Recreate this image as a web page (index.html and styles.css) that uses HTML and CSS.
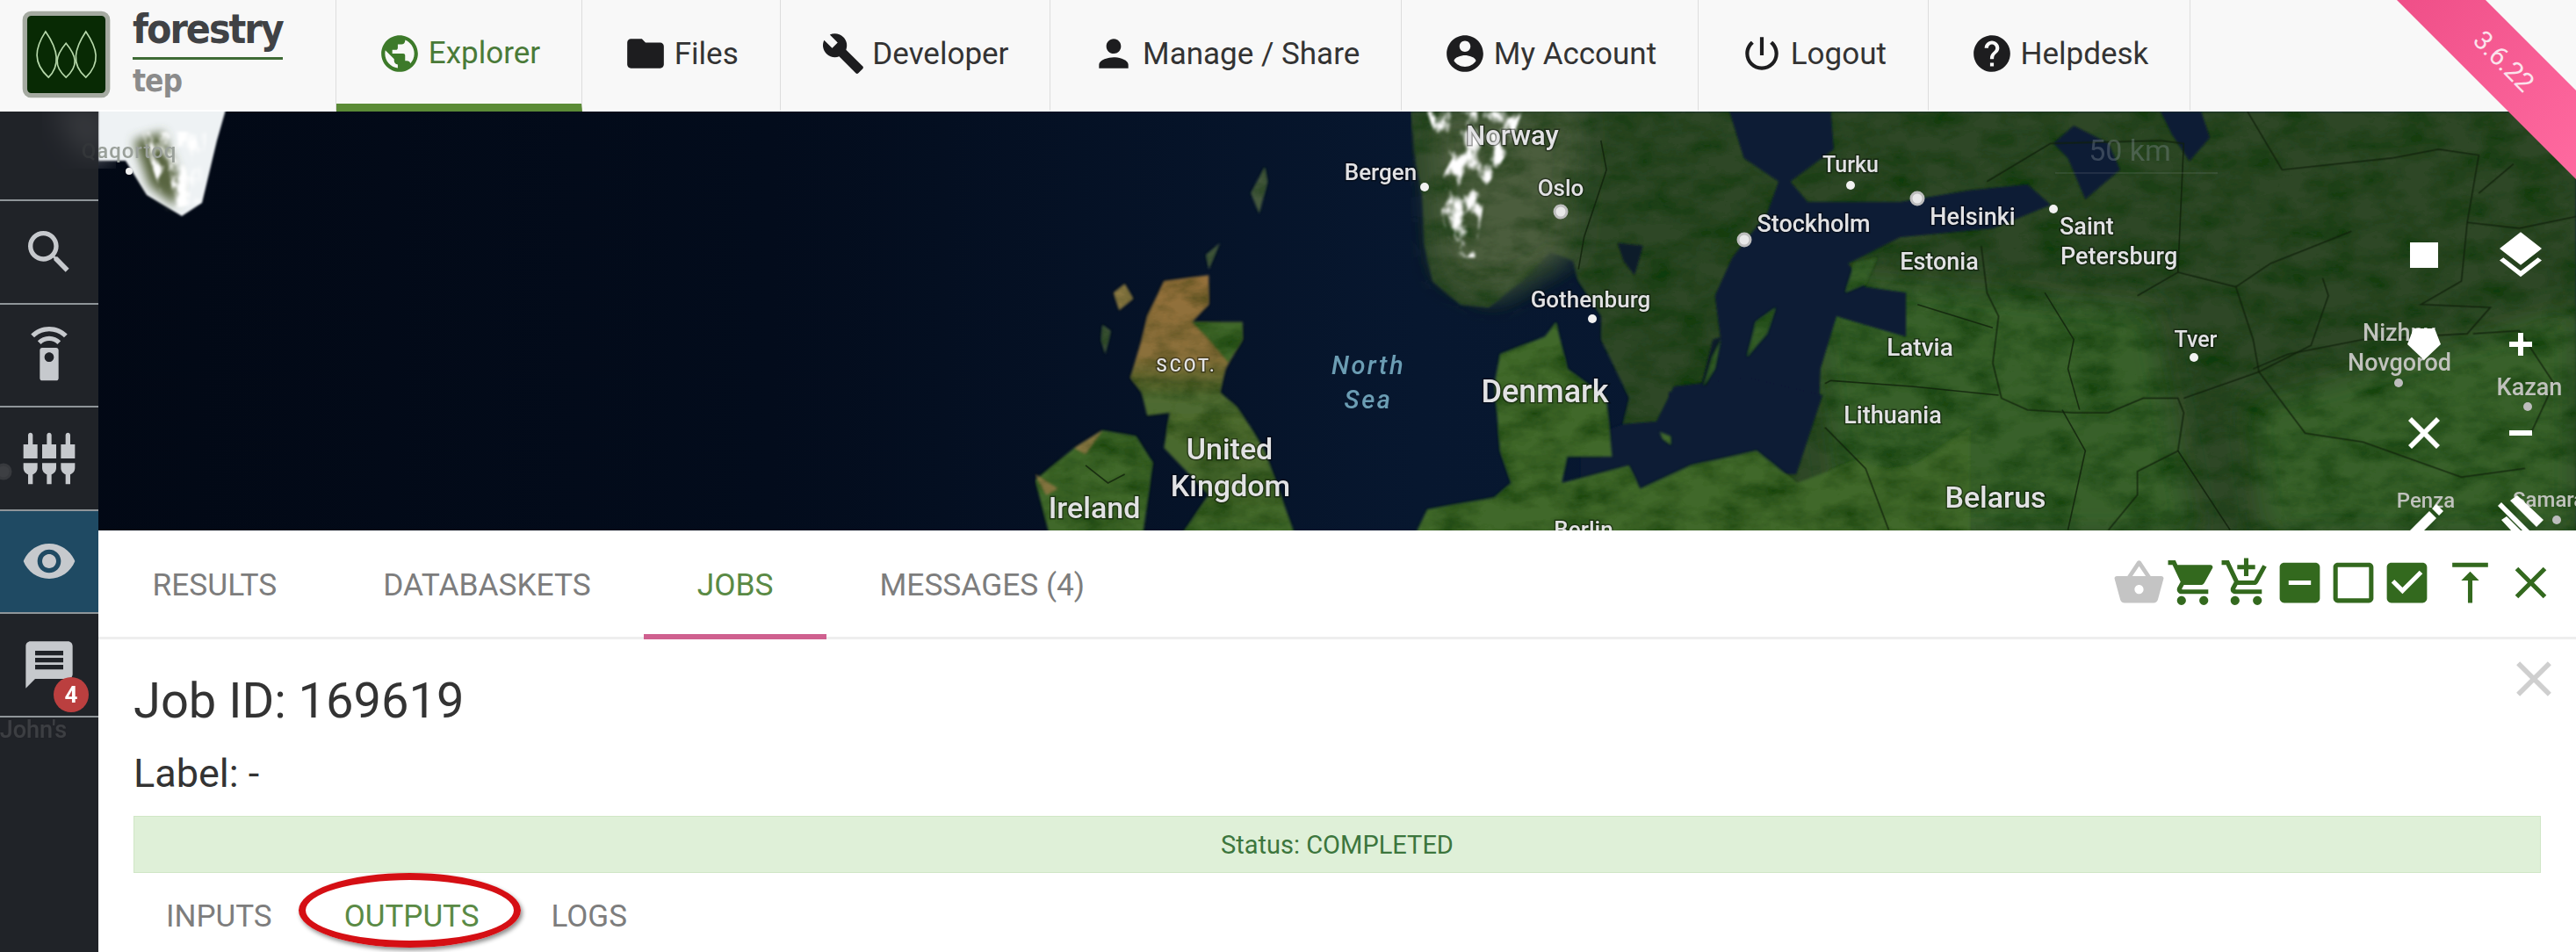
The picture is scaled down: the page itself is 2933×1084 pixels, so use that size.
FILE: index.html
```html
<!DOCTYPE html>
<html lang="en">
<head>
<meta charset="utf-8">
<title>Forestry TEP</title>
<link rel="stylesheet" href="styles.css">
</head>
<body>
<div class="app">
  <header class="topbar">
    <div class="brand">
      <svg class="logo" viewBox="72 30 308 313">
        <rect x="84" y="46" width="284" height="281" rx="22" class="logo-box"/>
        <path class="leaf" d="M155 108C118 165 110 215 165 265C210 220 195 165 155 108Z"/>
        <path class="leaf" d="M293 108C255 165 240 220 293 265C345 215 332 165 293 108Z"/>
        <path class="leaf" d="M225 148C190 190 180 225 225 265C270 225 260 190 225 148Z"/>
      </svg>
      <div class="wordmark">
        <span class="word-main">forestry</span>
        <span class="word-sub">tep</span>
      </div>
    </div>
    <nav class="nav">
      <a class="nav-item active"><svg class="nav-icon" viewBox="0 0 24 24"><path d="M12 2C6.48 2 2 6.48 2 12s4.48 10 10 10 10-4.48 10-10S17.52 2 12 2zm-1 17.93c-3.95-.49-7-3.85-7-7.93 0-.62.08-1.21.21-1.79L9 15v1c0 1.1.9 2 2 2v1.93zm6.9-2.54c-.26-.81-1-1.39-1.9-1.39h-1v-3c0-.55-.45-1-1-1H8v-2h2c.55 0 1-.45 1-1V7h2c1.1 0 2-.9 2-2v-.41c2.93 1.19 5 4.06 5 7.41 0 2.08-.8 3.97-2.1 5.39z"/></svg>Explorer</a>
      <a class="nav-item"><svg class="nav-icon" viewBox="0 0 24 24"><path d="M10 4H4c-1.1 0-1.99.9-1.99 2L2 18c0 1.1.9 2 2 2h16c1.1 0 2-.9 2-2V8c0-1.1-.9-2-2-2h-8l-2-2z"/></svg>Files</a>
      <a class="nav-item"><svg class="nav-icon" viewBox="0 0 24 24"><path d="M22.7 19l-9.1-9.1c.9-2.3.4-5-1.5-6.9-2-2-5-2.4-7.4-1.3L9 6 6 9 1.6 4.7C.4 7.1.9 10.1 2.9 12.1c1.9 1.9 4.6 2.4 6.9 1.5l9.1 9.1c.4.4 1 .4 1.4 0l2.3-2.3c.5-.4.5-1.1.1-1.4z"/></svg>Developer</a>
      <a class="nav-item"><svg class="nav-icon" viewBox="0 0 24 24"><path d="M12 12c2.21 0 4-1.79 4-4s-1.79-4-4-4-4 1.79-4 4 1.79 4 4 4zm0 2c-2.67 0-8 1.34-8 4v2h16v-2c0-2.66-5.33-4-8-4z"/></svg>Manage / Share</a>
      <a class="nav-item"><svg class="nav-icon" viewBox="0 0 24 24"><path d="M12 2C6.48 2 2 6.48 2 12s4.48 10 10 10 10-4.48 10-10S17.52 2 12 2zm0 3c1.66 0 3 1.34 3 3s-1.34 3-3 3-3-1.34-3-3 1.34-3 3-3zm0 14.2c-2.5 0-4.71-1.28-6-3.22.03-1.99 4-3.08 6-3.08 1.99 0 5.97 1.09 6 3.08-1.29 1.94-3.5 3.22-6 3.22z"/></svg>My Account</a>
      <a class="nav-item"><svg class="nav-icon" viewBox="0 0 24 24"><path d="M13 3h-2v10h2V3zm4.83 2.17l-1.42 1.42C17.99 7.86 19 9.81 19 12c0 3.87-3.13 7-7 7s-7-3.13-7-7c0-2.19 1.01-4.14 2.58-5.42L6.17 5.17C4.23 6.82 3 9.26 3 12c0 4.97 4.03 9 9 9s9-4.03 9-9c0-2.74-1.23-5.18-3.17-6.83z"/></svg>Logout</a>
      <a class="nav-item"><svg class="nav-icon" viewBox="0 0 24 24"><path d="M12 2C6.48 2 2 6.48 2 12s4.48 10 10 10 10-4.48 10-10S17.52 2 12 2zm1 17h-2v-2h2v2zm2.07-7.75l-.9.92C13.45 12.9 13 13.5 13 15h-2v-.5c0-1.1.45-2.1 1.17-2.83l1.24-1.26c.37-.36.59-.86.59-1.41 0-1.1-.9-2-2-2s-2 .9-2 2H8c0-2.21 1.79-4 4-4s4 1.79 4 4c0 .88-.36 1.68-.93 2.25z"/></svg>Helpdesk</a>
    </nav>
  </header>

  <div class="stage">
    <svg class="map" viewBox="0 127 2933 957" preserveAspectRatio="none">
      <defs>
        <linearGradient id="sea" x1="0" x2="1" y1="0" y2="0">
          <stop offset="0" stop-color="#020814"/>
          <stop offset=".3" stop-color="#030c1c"/>
          <stop offset=".55" stop-color="#07172f"/>
          <stop offset="1" stop-color="#0a1a36"/>
        </linearGradient>
        <linearGradient id="uk" x1="0" x2="0" y1="0" y2="1">
          <stop offset="0" stop-color="#94703a"/>
          <stop offset=".3" stop-color="#8a6f3a"/>
          <stop offset=".45" stop-color="#4f6a30"/>
          <stop offset="1" stop-color="#3f662a"/>
        </linearGradient>
        <filter id="land" x="0" y="0" width="100%" height="100%">
          <feGaussianBlur in="SourceGraphic" stdDeviation="1.5" result="b"/>
          <feTurbulence type="fractalNoise" baseFrequency=".022 .04" numOctaves="5" seed="7" result="n"/>
          <feColorMatrix in="n" type="matrix" values="0 0 0 0 0 0 0 0 0 .04 0 0 0 0 0 0 0 0 1.5 -.55" result="d"/>
          <feComposite in="d" in2="b" operator="in" result="m"/>
          <feMerge><feMergeNode in="b"/><feMergeNode in="m"/></feMerge>
        </filter>
        <filter id="soft" x="-20%" y="-20%" width="140%" height="140%"><feGaussianBlur stdDeviation="16"/></filter>
        <filter id="edge" x="-5%" y="-5%" width="110%" height="110%"><feGaussianBlur stdDeviation="1.2"/></filter>
        <filter id="haze" x="-30%" y="-30%" width="160%" height="160%"><feGaussianBlur stdDeviation="6"/></filter>
        <filter id="snow" x="-20%" y="-20%" width="140%" height="140%">
          <feTurbulence type="fractalNoise" baseFrequency=".06 .04" numOctaves="4" seed="4" result="n"/>
          <feColorMatrix in="n" type="matrix" values="0 0 0 0 1 0 0 0 0 1 0 0 0 0 1 0 0 0 5 -2.3" result="w"/>
          <feComposite in="w" in2="SourceAlpha" operator="in"/>
          <feGaussianBlur stdDeviation="1.6"/>
        </filter>
      </defs>

      <rect x="0" y="127" width="2933" height="957" fill="url(#sea)"/>

      <polygon class="ghost" filter="url(#soft)" points="60,120 120,120 120,180 90,175"/>
      <g filter="url(#edge)">
        <polygon class="ice" points="112,125 257,125 247,160 230,231 207,246 167,222 143,183 112,183"/>
      </g>
      <polygon class="ice-green" filter="url(#haze)" points="152,160 185,150 205,205 200,235 170,212"/>
      <g filter="url(#snow)">
        <polygon class="snow" points="160,150 235,150 228,230 190,240"/>
      </g>

      <g filter="url(#land)">
        <polygon class="land-north" points="1606,127 1612,187 1619,220 1622,280 1631,320 1663,347 1695,350 1733,320 1765,287 1791,297 1797,320 1823,360 1823,387 1855,453 1848,483 1880,610 2933,610 2933,127"/>
        <polygon class="land-mid" filter="url(#soft)" points="2060,310 2450,350 2500,610 2100,610"/>
        <polygon class="land-mid" filter="url(#soft)" points="2560,460 2933,350 2933,610 2580,610"/>
        <polygon class="land-nor" filter="url(#soft)" points="1625,127 1800,127 1790,290 1700,340 1640,310"/>
      </g>

      <g filter="url(#edge)">
        <g transform="translate(1900 120) scale(.6588 .3333)">
          <path class="water" d="M105 20L280 20L285 150L210 260L240 330L400 330L520 290L620 270L660 340L560 420L400 450L350 500L310 540L340 620L410 640L410 790L340 750L290 720L262 900L260 1010L215 1230L170 1245L100 1200L0 1280L0 980L55 960L90 800L80 650L110 520L170 370L190 260L130 180Z"/>
          <path class="water" d="M665 130L700 70L760 130L780 220L720 320L690 180Z"/>
          <path class="water" d="M850 20L920 20L935 110L900 190L870 100Z"/>
        </g>
        <polygon class="water" points="1848,483 1886,480 1906,440 1990,430 2075,450 2045,540 2000,540 1900,560 1860,610 1800,610 1800,500"/>
        <g transform="translate(1000 120) scale(.6378 .3333)">
          <path class="lake" d="M1320 470L1365 480L1350 580L1330 530Z"/>
          <path class="lake" d="M1490 800L1505 790L1480 960L1470 950Z"/>
        </g>
      </g>

      <g filter="url(#land)">
        <g transform="translate(1900 120) scale(.6588 .3333)">
          <path class="land-mid" d="M135 860L150 740L185 690L170 780Z"/>
          <path class="land-mid" d="M305 640L320 540L360 520L340 610Z"/>
          <path class="land-mid" d="M60 960L75 860L90 800L80 900Z"/>
        </g>
        <g transform="translate(1000 120) scale(.6378 .3333)">
          <path class="land-south" d="M950 1500L980 1380L1100 1340L1130 1290L1110 1180L1100 950L1110 850L1190 790L1210 740L1230 900L1300 1000L1310 1200L1230 1200L1220 1290L1340 1230L1360 1310L1450 1230L1568 1180L1640 1290L1750 1210L1800 1245L1850 1230L1950 1100L1950 1500Z"/>
          <path class="land-south" d="M1395 1115L1415 1130L1415 1160L1400 1140Z"/>
          <path class="land-uk" d="M510 600L590 580L590 680L560 740L650 740L650 800L620 900L610 980L640 1030L665 1100L690 1180L750 1500L530 1500L590 1330L510 1170L520 1050L480 1060L470 980L450 930L470 800L480 720Z"/>
          <path class="land-south" d="M560 740L650 740L650 800L625 880L590 800Z"/>
          <path class="land-south" d="M400 1110L460 1130L490 1220L470 1500L310 1500L280 1280L350 1170Z"/>
          <path class="land-tan" d="M400 1110L350 1170L370 1190Z"/>
          <path class="land-tan" d="M280 1260L320 1310L300 1330Z"/>
          <path class="land-tan" d="M440 610L455 660L430 700L420 640Z"/>
          <path class="land-isle" d="M400 750L415 770L405 850L398 800Z"/>
          <path class="land-isle" d="M690 210L695 260L680 370L665 300Z"/>
          <path class="land-isle" d="M610 470L590 560L585 510Z"/>
        </g>
      </g>

      <g filter="url(#snow)">
        <g transform="translate(1000 120) scale(.6378 .3333)">
          <path class="snow" d="M980 20L1150 20L1120 170L1085 280L1065 520L1030 520L1005 380L1005 250L1025 180L990 80Z"/>
        </g>
      </g>

      <g transform="translate(1900 120) scale(.6588 .3333)" class="borders">
        <path d="M540 480L550 640L570 720L560 880L575 1000L620 1040L700 1050L760 1050L820 1000L880 1000L890 1050L880 1180L810 1250L810 1330L760 1450"/>
        <path d="M270 950L280 940L420 960L570 990M270 1100L340 1240L380 1450"/>
        <path d="M430 680L560 760M650 640L700 800L690 900L710 1040"/>
        <path d="M810 650L880 570L890 130L850 120L660 130L550 260"/>
        <path d="M880 570L980 620L1010 800L1020 910L890 1000"/>
        <path d="M1130 590L1140 650L1110 820L1020 910L1100 1120L1200 1150L1370 1270L1480 1240"/>
        <path d="M1000 20L1060 220L1250 180L1330 150L1400 170L1380 400L1370 600L1300 680L1420 690L1380 780L1200 800L1070 850L1010 900"/>
        <path d="M1490 1120L1530 950L1470 770L1390 780M1460 200L1400 300M1180 430L1040 540L980 620M1568 380L1470 420L1380 400"/>
        <path d="M690 1450L720 1180L680 1040M970 1450L880 1180"/>
      </g>
      <g transform="translate(1000 120) scale(.6378 .3333)" class="borders">
        <path d="M1290 120L1300 220L1260 450L1250 560M370 1230L410 1290L440 1260"/>
      </g>

      <circle class="dot" cx="147" cy="195" r="4"/>
      <circle class="dot" cx="1622" cy="213" r="5"/>
      <circle class="ring" cx="1777" cy="241" r="7"/>
      <circle class="dot" cx="1813" cy="363" r="5"/>
      <circle class="ring" cx="1986" cy="273" r="7"/>
      <circle class="dot" cx="2107" cy="211" r="5"/>
      <circle class="ring" cx="2183" cy="226" r="7"/>
      <circle class="dot" cx="2338" cy="238" r="5"/>
      <circle class="dot" cx="2498" cy="407" r="5"/>
      <circle class="dot dim" cx="2731" cy="436" r="5"/>
      <circle class="dot dim" cx="2878" cy="463" r="5"/>
      <circle class="dot dim" cx="2911" cy="592" r="5"/>
      <circle class="ring" cx="4" cy="537" r="8"/>

      <text class="lbl s24 qq" x="147" y="180">Qaqortoq</text>
      <text class="lbl s27" x="38" y="840">John's</text>
      <text class="lbl s30" x="1722" y="165">Norway</text>
      <text class="lbl s26" x="1572" y="205">Bergen</text>
      <text class="lbl s26" x="1777" y="223">Oslo</text>
      <text class="lbl s26" x="1811" y="350">Gothenburg</text>
      <text class="lbl s27" x="2065" y="264">Stockholm</text>
      <text class="lbl s25" x="2107" y="196">Turku</text>
      <text class="lbl s27" x="2246" y="256">Helsinki</text>
      <text class="lbl s27 start" x="2345" y="267">Saint</text>
      <text class="lbl s27 start" x="2346" y="301">Petersburg</text>
      <text class="lbl s27" x="2208" y="307">Estonia</text>
      <text class="lbl s28" x="2186" y="405">Latvia</text>
      <text class="lbl s27" x="2155" y="482">Lithuania</text>
      <text class="lbl s34" x="2272" y="578">Belarus</text>
      <text class="lbl s25" x="2500" y="395">Tver</text>
      <text class="lbl s27 dim start" x="2690" y="388">Nizhny</text>
      <text class="lbl s27 dim" x="2732" y="422">Novgorod</text>
      <text class="lbl s27 dim" x="2880" y="450">Kazan</text>
      <text class="lbl s24 dim" x="2762" y="578">Penza</text>
      <text class="lbl s24 dim start" x="2861" y="577">Samara</text>
      <text class="lbl s37" x="1759" y="458">Denmark</text>
      <text class="lbl s34" x="1400" y="523">United</text>
      <text class="lbl s34" x="1401" y="565">Kingdom</text>
      <text class="lbl s34" x="1246" y="590">Ireland</text>
      <text class="lbl scot" x="1351" y="423">SCOT.</text>
      <text class="sea-lbl" x="1558" y="426">North</text>
      <text class="sea-lbl" x="1558" y="465">Sea</text>
      <text class="lbl s26" x="1803" y="612">Berlin</text>
      <text class="scale-text" x="2425" y="183">50 km</text>
      <line class="scale-line" x1="2340" x2="2525" y1="197" y2="197"/>
    </svg>

    <div class="overlay">
      <aside class="sidebar">
        <div class="side-item side-top"></div>
        <div class="side-item"><svg class="side-icon" viewBox="0 0 24 24"><path d="M15.5 14h-.79l-.28-.27C15.41 12.59 16 11.11 16 9.5 16 5.91 13.09 3 9.5 3S3 5.91 3 9.5 5.91 16 9.5 16c1.61 0 3.09-.59 4.23-1.57l.27.28v.79l5 4.99L20.49 19l-4.99-5zm-6 0C7.01 14 5 11.99 5 9.5S7.01 5 9.5 5 14 7.01 14 9.5 11.99 14 9.5 14z"/></svg></div>
        <div class="side-item"><svg class="side-icon" viewBox="0 0 24 24"><path d="M15 9H9c-.55 0-1 .45-1 1v12c0 .55.45 1 1 1h6c.55 0 1-.45 1-1V10c0-.55-.45-1-1-1zm-3 6c-1.1 0-2-.9-2-2s.9-2 2-2 2 .9 2 2-.9 2-2 2zM7.05 6.05l1.41 1.41C9.37 6.56 10.62 6 12 6s2.63.56 3.54 1.46l1.41-1.41C15.68 4.78 13.93 4 12 4s-3.68.78-4.95 2.05zM12 0C8.96 0 6.21 1.23 4.22 3.22l1.41 1.41C7.26 3.01 9.51 2 12 2s4.74 1.01 6.36 2.64l1.41-1.41C17.79 1.23 15.04 0 12 0z"/></svg></div>
        <div class="side-item"><svg class="side-icon" viewBox="0 0 24 24"><path d="M5 2c0-.55-.45-1-1-1s-1 .45-1 1v4H1v6h6V6H5V2zm4 14c0 1.3.84 2.4 2 2.82V23h2v-4.18c1.16-.41 2-1.51 2-2.82v-2H9v2zm-8 0c0 1.3.84 2.4 2 2.82V23h2v-4.18C6.16 18.4 7 17.3 7 16v-2H1v2zM21 6V2c0-.55-.45-1-1-1s-1 .45-1 1v4h-2v6h6V6h-2zm-8-4c0-.55-.45-1-1-1s-1 .45-1 1v4H9v6h6V6h-2V2zm4 14c0 1.3.84 2.4 2 2.82V23h2v-4.18c1.16-.41 2-1.51 2-2.82v-2h-6v2z"/></svg></div>
        <div class="side-item side-active"><svg class="side-icon" viewBox="0 0 24 24"><path d="M12 4.5C7 4.5 2.73 7.61 1 12c1.73 4.39 6 7.5 11 7.5s9.27-3.11 11-7.5c-1.73-4.39-6-7.5-11-7.5zM12 17c-2.76 0-5-2.24-5-5s2.24-5 5-5 5 2.24 5 5-2.24 5-5 5zm0-8c-1.66 0-3 1.34-3 3s1.34 3 3 3 3-1.34 3-3-1.34-3-3-3z"/></svg></div>
        <div class="side-item"><svg class="side-icon" viewBox="0 0 24 24"><path d="M20 2H4c-1.1 0-1.99.9-1.99 2L2 22l4-4h14c1.1 0 2-.9 2-2V4c0-1.1-.9-2-2-2zm-2 12H6v-2h12v2zm0-3H6V9h12v2zm0-3H6V6h12v2z"/></svg><span class="badge">4</span></div>
      </aside>

      <main class="work">
        <div class="map-window">
          <div class="map-tools">
            <svg class="tool" viewBox="0 0 64 64"><rect x="16" y="17" width="32" height="29"/></svg>
            <svg class="tool" viewBox="0 0 24 24"><path d="M11.99 18.54l-7.37-5.73L3 14.07l9 7 9-7-1.63-1.27-7.38 5.74zM12 16l7.36-5.73L21 9l-9-7-9 7 1.63 1.27L12 16z"/></svg>
            <svg class="tool" viewBox="0 0 64 64"><polygon points="20,14 44,14 51,32 32,50 13,32"/></svg>
            <svg class="tool" viewBox="0 0 64 64"><path d="M29 19h6v10h10v6H35v10h-6V35H19v-6h10z"/></svg>
            <svg class="tool" viewBox="0 0 64 64"><path d="M18 14l14 14 14-14 4 4-14 14 14 14-4 4-14-14-14 14-4-4 14-14-14-14z"/></svg>
            <svg class="tool" viewBox="0 0 64 64"><rect x="19" y="29" width="26" height="6"/></svg>
            <svg class="tool" viewBox="0 0 64 64"><path d="M10 48L38 20l8 8-28 28-8 0zM41 17l5-5 8 8-5 5z"/></svg>
            <svg class="tool" viewBox="0 0 64 64"><path d="M6 14l4-4 44 44-4 4zM20 8l8-6 30 28-8 8zM10 30l6-4 24 24-6 6z"/></svg>
          </div>
        </div>

        <section class="panel">
          <div class="panel-head">
            <div class="panel-tabs">
              <a class="ptab">RESULTS</a>
              <a class="ptab">DATABASKETS</a>
              <a class="ptab ptab-active">JOBS</a>
              <a class="ptab">MESSAGES (4)</a>
            </div>
            <div class="actions">
              <svg class="act act-off" viewBox="0 0 24 24"><path d="M17.21 9l-4.38-6.56c-.19-.28-.51-.42-.83-.42-.32 0-.64.14-.83.43L6.79 9H2c-.55 0-1 .45-1 1 0 .09.01.18.04.27l2.54 9.27c.23.84 1 1.46 1.92 1.46h13c.92 0 1.69-.62 1.93-1.46l2.54-9.27L23 10c0-.55-.45-1-1-1h-4.79zM9 9l3-4.4L15 9H9zm3 8c-1.1 0-2-.9-2-2s.9-2 2-2 2 .9 2 2-.9 2-2 2z"/></svg>
              <svg class="act" viewBox="0 0 24 24"><path d="M7 18c-1.1 0-1.99.9-1.99 2S5.9 22 7 22s2-.9 2-2-.9-2-2-2zM1 2v2h2l3.6 7.59-1.35 2.45c-.16.28-.25.61-.25.96 0 1.1.9 2 2 2h12v-2H7.42c-.14 0-.25-.11-.25-.25l.03-.12.9-1.63h7.45c.75 0 1.41-.41 1.75-1.03l3.58-6.49c.08-.14.12-.31.12-.48 0-.55-.45-1-1-1H5.21l-.94-2H1zm16 16c-1.1 0-1.99.9-1.99 2s.89 2 1.99 2 2-.9 2-2-.9-2-2-2z"/></svg>
              <svg class="act" viewBox="0 0 24 24"><path d="M11 9h2V6h3V4h-3V1h-2v3H8v2h3v3zm-4 9c-1.1 0-1.99.9-1.99 2S5.9 22 7 22s2-.9 2-2-.9-2-2-2zm10 0c-1.1 0-1.99.9-1.99 2s.89 2 1.99 2 2-.9 2-2-.9-2-2-2zm-9.83-3.25l.03-.12.9-1.63h7.45c.75 0 1.41-.41 1.75-1.03l3.86-7.01L19.42 4h-.01l-1.1 2-2.76 5H8.53l-.13-.27L6.16 6l-.95-2-.94-2H1v2h2l3.6 7.59-1.35 2.45c-.16.28-.25.61-.25.96 0 1.1.9 2 2 2h12v-2H7.42c-.13 0-.25-.11-.25-.25z"/></svg>
              <svg class="act" viewBox="0 0 24 24"><path d="M19 3H5c-1.1 0-2 .9-2 2v14c0 1.1.9 2 2 2h14c1.1 0 2-.9 2-2V5c0-1.1-.9-2-2-2zm-2 10H7v-2h10v2z"/></svg>
              <svg class="act" viewBox="0 0 24 24"><path d="M19 5v14H5V5h14m0-2H5c-1.1 0-2 .9-2 2v14c0 1.1.9 2 2 2h14c1.1 0 2-.9 2-2V5c0-1.1-.9-2-2-2z"/></svg>
              <svg class="act" viewBox="0 0 24 24"><path d="M19 3H5c-1.11 0-2 .9-2 2v14c0 1.1.89 2 2 2h14c1.11 0 2-.9 2-2V5c0-1.1-.89-2-2-2zm-9 14l-5-5 1.41-1.41L10 14.17l7.59-7.59L19 8l-9 9z"/></svg>
              <svg class="act act-top" viewBox="0 0 24 24"><path d="M8 11h3v10h2V11h3l-4-4-4 4zM4 3v2h16V3H4z"/></svg>
              <svg class="act act-close" viewBox="0 0 24 24"><path d="M19 6.41L17.59 5 12 10.59 6.41 5 5 6.41 10.59 12 5 17.59 6.41 19 12 13.41 17.59 19 19 17.59 13.41 12z"/></svg>
            </div>
          </div>

          <div class="job">
            <div class="job-head">
              <h1 class="job-id">Job ID: 169619</h1>
              <svg class="job-close" viewBox="0 0 24 24"><path d="M19 6.41L17.59 5 12 10.59 6.41 5 5 6.41 10.59 12 5 17.59 6.41 19 12 13.41 17.59 19 19 17.59 13.41 12z"/></svg>
            </div>
            <div class="job-label">Label: -</div>
            <div class="status">Status: COMPLETED</div>
            <div class="job-tabs">
              <a class="jtab">INPUTS</a>
              <a class="jtab jtab-active">OUTPUTS<span class="circle"></span></a>
              <a class="jtab">LOGS</a>
            </div>
          </div>
        </section>
      </main>
    </div>
  </div>

  <div class="ribbon"><span class="ribbon-text">3.6.22</span></div>
</div>
</body>
</html>
```
FILE: styles.css
```css
* { box-sizing: border-box; }
html, body { margin: 0; height: 100%; }
body { font-family: Roboto, "Liberation Sans", sans-serif; color: #333; overflow: hidden; background: #fff; }
.app { position: relative; height: 1084px; display: flex; flex-direction: column; overflow: hidden; }

/* top bar */
.topbar { display: flex; height: 127px; flex: none; background: #f8f8f8; }
.brand { width: 383px; flex: none; display: flex; align-items: flex-start; border-right: 1px solid #ddd; border-bottom: 2px solid #fff; padding: 10px 0 0 24px; gap: 24px; }
.logo { width: 103px; height: 104px; flex: none; }
.logo-box { fill: #082a04; stroke: #a5aaa1; stroke-width: 16px; }
.leaf { fill: none; stroke: #b6d8aa; stroke-width: 5px; }
.wordmark { display: flex; flex-direction: column; width: 171px; }
.word-main { font-family: "DejaVu Sans", sans-serif; font-stretch: condensed; font-weight: 700; font-size: 46px; line-height: 50px; height: 60px; color: #404245; border-bottom: 3px solid #3e6a35; letter-spacing: -2px; white-space: nowrap; margin-top: -2px; }
.word-sub { font-family: "DejaVu Sans", sans-serif; font-stretch: condensed; font-weight: 700; font-size: 35px; line-height: 40px; margin-top: 4px; color: #8b8b8b; letter-spacing: -1px; }
.nav { display: flex; flex: 1; }
.nav-item { display: flex; align-items: center; gap: 8px; height: 127px; padding: 0 46.8px 3px; font-size: 35px; color: #333; border-right: 1px solid #ddd; border-bottom: 2px solid #fff; white-space: nowrap; }
.nav-icon { width: 50px; height: 50px; fill: #1d1d1f; flex: none; }
.nav-item.active { color: #4a7a38; border-bottom: 9px solid #5b8b36; padding-top: 6px; }
.nav-item.active .nav-icon { fill: #3d7a2a; }

/* ribbon */
.ribbon { position: absolute; top: 0; right: 0; width: 204px; height: 204px; background: linear-gradient(135deg, #ef4f88, #ff6aa0); clip-path: polygon(0 0, 101px 0, 204px 103px, 204px 204px); }
.ribbon-text { position: absolute; left: 72px; top: 52px; width: 100px; text-align: center; transform: rotate(45deg); color: #fbe3ec; font-size: 30px; }

/* stage */
.stage { flex: 1; display: grid; grid-template: minmax(0, 1fr) / minmax(0, 1fr); min-height: 0; }
.map { grid-area: 1 / 1; width: 100%; height: 100%; display: block; }
.overlay { grid-area: 1 / 1; display: flex; min-height: 0; min-width: 0; }

.ghost { fill: #c8c8c8; }
.ice { fill: #eef2f4; }
.ice-green { fill: #59653f; }
.land-north { fill: #2e4727; }
.land-mid { fill: #37602a; }
.land-nor { fill: #4b5d3e; }
.land-south { fill: #3f672b; }
.land-uk { fill: url(#uk); }
.land-tan { fill: #8d7a45; }
.land-isle { fill: #45583e; }
.water { fill: #081a35; }
.lake { fill: #0c1c2c; }
.snow { fill: #fff; }
.borders path { fill: none; stroke: #11210c; stroke-width: 1.6px; vector-effect: non-scaling-stroke; opacity: .8; }
.dot { fill: #f2f2f2; }
.dot.dim { fill: #bdbdbd; }
.ring { fill: #e8e8e8; stroke: #bdbdbd; stroke-width: 3px; }
.lbl { font-family: Roboto, sans-serif; font-weight: 500; fill: #e2e2e4; text-anchor: middle; paint-order: stroke; stroke: rgba(0, 0, 0, .4); stroke-width: 3px; }
.lbl.start { text-anchor: start; }
.lbl.dim { fill: #c0c2bd; stroke: none; }
.lbl.qq { fill: #9aa09a; stroke: none; letter-spacing: 1px; }
.s24 { font-size: 24px; }
.s25 { font-size: 25px; }
.s26 { font-size: 26px; }
.s27 { font-size: 27px; }
.s28 { font-size: 28px; }
.s30 { font-size: 31px; }
.s34 { font-size: 34px; }
.s37 { font-size: 36px; }
.scot { font-size: 20px; letter-spacing: 3px; }
.sea-lbl { font-family: Roboto, sans-serif; font-style: italic; font-weight: 500; font-size: 29px; letter-spacing: 2.5px; fill: #6b9db3; text-anchor: middle; }
.scale-text { font-family: Roboto, sans-serif; font-size: 34px; fill: #8b959e; opacity: .35; text-anchor: middle; }
.scale-line { stroke: #9aa4a8; stroke-width: 1px; opacity: .3; }

/* sidebar */
.sidebar { width: 112px; flex: none; background: rgba(36, 39, 43, .88); }
.side-item { position: relative; height: 117.5px; display: flex; align-items: center; justify-content: center; border-bottom: 2px solid #8f9599; }
.side-top { height: 102px; }
.side-active { background: #1f4a63; }
.side-icon { width: 64px; height: 64px; fill: #c6c9cd; }
.badge { position: absolute; left: 61px; top: 72px; width: 40px; height: 40px; border-radius: 50%; background: #bb3f3f; color: #fff; font-size: 26px; font-weight: 700; display: flex; align-items: center; justify-content: center; }

/* work area */
.work { flex: 1; min-width: 0; display: flex; flex-direction: column; }
.map-window { position: relative; flex: 1; min-height: 0; overflow: hidden; }
.map-tools { position: absolute; top: 132px; right: 31px; display: grid; grid-template-columns: 64px 64px; grid-auto-rows: 64px; column-gap: 46px; row-gap: 37px; }
.tool { width: 64px; height: 64px; fill: #fff; }

/* panel */
.panel { height: 480px; flex: none; background: #fff; display: flex; flex-direction: column; }
.panel-head { height: 124px; flex: none; display: flex; justify-content: space-between; align-items: stretch; border-bottom: 3px solid #eee; padding-left: 1px; }
.panel-tabs { display: flex; }
.ptab { display: flex; align-items: center; height: 124px; padding: 0 60.5px 0; font-size: 35.3px; color: #7d7d7d; white-space: nowrap; }
.ptab-active { color: #5a8a45; border-bottom: 6px solid #cf608f; padding-top: 6px; }
.actions { display: flex; align-items: center; padding-right: 21px; padding-bottom: 2px; }
.act { width: 61px; height: 61px; fill: #33691e; }
.act-off { fill: #c4c4c4; }
.act-top { margin-left: 11px; }
.act-close { margin-left: 8px; }

.job { padding: 0 40px; display: flex; flex-direction: column; flex: 1; min-width: 0; }
.job-head { display: flex; justify-content: space-between; align-items: center; height: 86px; margin-top: 27px; }
.job-id { margin: 0; font-weight: 400; font-size: 56px; color: #333; }
.job-close { width: 68px; height: 68px; fill: #cfcfcf; margin-right: -26px; margin-top: -16px; align-self: flex-start; }
.job-label { font-size: 45px; color: #333; line-height: 54px; margin-top: 13px; }
.status { width: 2741px; height: 65px; margin-top: 21px; background: #dff0d8; border: 1px solid #d0e6c6; color: #3c763d; font-size: 29px; display: flex; align-items: center; justify-content: center; }
.job-tabs { display: flex; margin-left: -1px; margin-top: 28px; padding-left: 38px; }
.jtab { position: relative; font-size: 35px; color: #7d7d7d; padding-right: 82px; white-space: nowrap; line-height: 44px; }
.jtab-active { color: #5a8a45; }
.circle { position: absolute; left: -52px; top: -28px; width: 253px; height: 85px; border: 8px solid #d50f14; border-radius: 50%; box-shadow: 2px 3px 5px rgba(0, 0, 0, .45); }
```
